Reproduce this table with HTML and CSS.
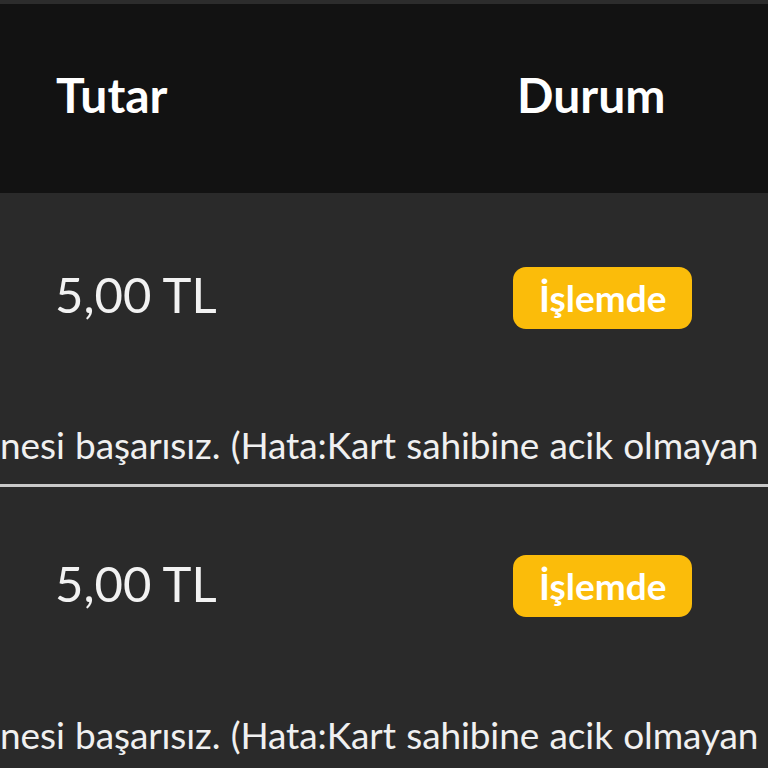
FILE: index.html
```html
<!DOCTYPE html>
<html lang="tr">
<head>
<meta charset="utf-8">
<link rel="stylesheet" href="styles.css">
</head>
<body>
<div class="table">
  <div class="topline"></div>
  <div class="head">
    <div class="col-amount">Tutar</div>
    <div class="col-status">Durum</div>
  </div>
  <div class="row">
    <div class="main">
      <div class="col-amount">5,00 TL</div>
      <div class="col-status"><span class="badge">İşlemde</span></div>
    </div>
    <div class="error">nesi başarısız. (Hata:Kart sahibine acik olmayan</div>
  </div>
  <div class="row row-sep">
    <div class="main">
      <div class="col-amount">5,00 TL</div>
      <div class="col-status"><span class="badge">İşlemde</span></div>
    </div>
    <div class="error">nesi başarısız. (Hata:Kart sahibine acik olmayan</div>
  </div>
</div>
</body>
</html>
```
FILE: styles.css
```css
html, body {
  margin: 0;
  padding: 0;
  background: #2a2a2a;
  overflow: hidden;
}
body {
  font-family: "Lato", "Noto Sans", sans-serif;
  color: #f2f2f2;
  width: 768px;
  height: 768px;
}
.table {
  display: flex;
  flex-direction: column;
}
.topline {
  height: 4px;
  background: #2c2c2c;
}
.head {
  height: 189px;
  box-sizing: border-box;
  padding-bottom: 8px;
  background: #121212;
  display: grid;
  grid-template-columns: 461px 1fr;
  align-items: center;
  padding-left: 56px;
  font-weight: 700;
  font-size: 48px;
  color: #ffffff;
}
.row {
  height: 290px;
  background: #2a2a2a;
  display: flex;
  flex-direction: column;
}
.row-sep {
  border-top: 3px solid #c9c9c9;
  margin-top: 1px;
}
.main {
  height: 210px;
  box-sizing: border-box;
  padding-bottom: 8px;
  display: grid;
  grid-template-columns: 458px 1fr;
  align-items: center;
  padding-left: 55px;
  font-size: 49px;
}
.row-sep .main {
  height: 200px;
  padding-bottom: 8px;
}
.badge {
  display: inline-block;
  margin-top: 8px;
  background: #fbbc0a;
  color: #ffffff;
  font-weight: 700;
  font-size: 37px;
  line-height: 62px;
  height: 62px;
  padding: 0 26px;
  border-radius: 13px;
}
.row-sep .badge {
  margin-top: 6px;
}
.error {
  white-space: nowrap;
  font-size: 37px;
  color: #f0f0f0;
  padding-top: 12px;
  line-height: 60px;
  letter-spacing: -0.1px;
  word-spacing: 1px;
}
.row-sep .error {
  padding-top: 18px;
}
```
